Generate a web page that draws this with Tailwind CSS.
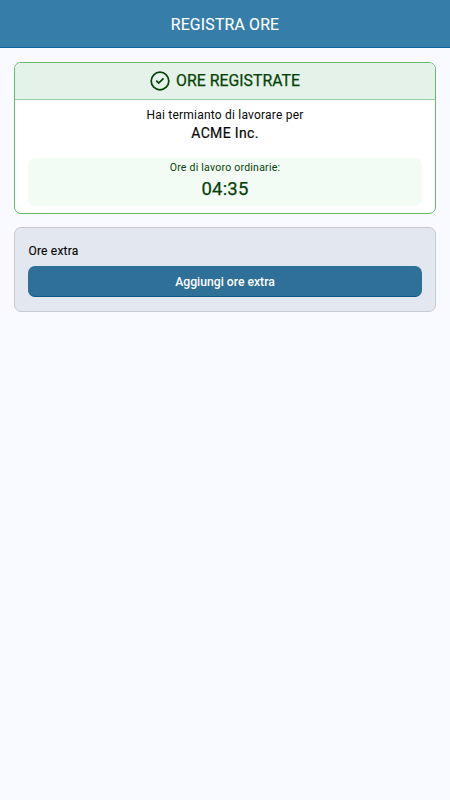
<!DOCTYPE html>
<html lang="it">
<head>
<meta charset="utf-8">
<meta name="viewport" content="width=device-width, initial-scale=1">
<title>Registra ore</title>
<script src="https://cdn.jsdelivr.net/npm/@tailwindcss/browser@4"></script>
</head>
<body class="min-h-screen bg-[#f8faff] font-[Roboto,sans-serif] text-[#080808]">
<header class="flex h-12 items-center justify-center border-b border-[#0d639b] bg-[#367ea9] pt-[2px]">
  <h1 class="text-[15.8px] leading-5 tracking-[0.2px] text-white [-webkit-text-stroke:0.1px]">REGISTRA ORE</h1>
</header>
<main class="flex flex-col gap-[14px] px-[14px] pt-[14px]">
  <section class="h-[152px] overflow-hidden rounded-[7px] border border-[#65b96b] bg-white">
    <div class="flex h-[37px] items-center justify-center gap-[6px] border-b border-[#a0cfa5] bg-[#e5f2e9] text-[#064206]">
      <svg class="size-5" viewBox="0 0 20 20" fill="none" stroke="currentColor" stroke-width="1.7"><circle cx="10" cy="10" r="8.8"/><path d="M6.2 9.7 8.7 12.1 13.5 7.4"/></svg>
      <h2 class="text-[15.8px] leading-5 font-normal tracking-[0.03px] [-webkit-text-stroke:0.25px]">ORE REGISTRATE</h2>
    </div>
    <div class="px-[13px] pt-[6px] text-center">
      <p class="text-xs leading-[18px] tracking-[0.21px]">Hai termianto di lavorare per</p>
      <p class="text-[14px] leading-[18px] tracking-[0.35px] [-webkit-text-stroke:0.2px]">ACME Inc.</p>
      <div class="mt-[16px] h-12 rounded-[7px] bg-[#f3fbf5] pt-[3px] text-[#064206]">
        <p class="text-[10.5px] leading-[14px] tracking-[0.24px]">Ore di lavoro ordinarie:</p>
        <p class="mt-[2px] text-[18.5px] leading-6 tracking-[0.2px] [-webkit-text-stroke:0.25px]">04:35</p>
      </div>
    </div>
  </section>
  <section class="-mt-px h-[85px] rounded-[7px] border border-[#c7cbd0] bg-[#e3e8f0] px-[13px] pt-[14px]">
    <h3 class="pl-[0.5px] text-xs leading-[18px] tracking-[0.2px] [-webkit-text-stroke:0.15px]">Ore extra</h3>
    <button class="mt-[6px] flex h-[31px] w-full items-center justify-center rounded-[7px] border-b border-[#0b598b] bg-[#2f7098] pt-[2px] text-[12.2px] font-medium text-white">Aggiungi ore extra</button>
  </section>
</main>
</body>
</html>
